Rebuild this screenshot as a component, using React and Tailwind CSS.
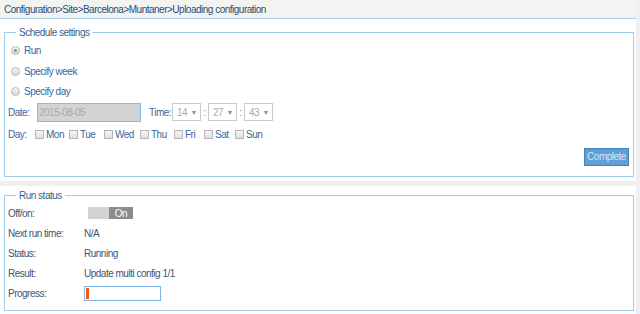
import React from 'react';

const DAYS = [
  { d: 'Mon', w: 'w-[34px]' },
  { d: 'Tue', w: 'w-[35px]' },
  { d: 'Wed', w: 'w-[36px]' },
  { d: 'Thu', w: 'w-[34px]' },
  { d: 'Fri', w: 'w-[30px]' },
  { d: 'Sat', w: 'w-[31px]' },
  { d: 'Sun', w: 'w-[30px]' },
];

const Radio = ({ checked, label }) => (
  <label className="flex items-center gap-[4px] pl-[3px]">
    <span className="w-[9px] h-[9px] rounded-full border border-[#b9b9b9] bg-gradient-to-b from-[#f4f4f4] to-[#d8d8d8] flex items-center justify-center">
      {checked && <span className="w-[3px] h-[3px] rounded-full bg-[#8a8a8a]" />}
    </span>
    <span>{label}</span>
  </label>
);

const TimeSelect = ({ value }) => (
  <div className="w-[29px] h-[18px] border border-[#c8c8c8] bg-white flex items-center justify-between pl-[4px] pr-[3px] text-[#a9a9a9]">
    <span>{value}</span>
    <span className="text-[7px] leading-none text-[#8f8f8f]">▼</span>
  </div>
);

const Row = ({ label, children }) => (
  <div className="h-[20px] flex items-center">
    <span className="w-[76px]">{label}</span>
    {children}
  </div>
);

export default function App() {
  return (
    <div className="w-[640px] h-[314px] bg-[#f0f0f0] overflow-hidden font-['Liberation_Sans',Arial,sans-serif] text-[10px] tracking-[-0.5px] leading-[13px]">
      <div className="w-[636px] h-[19px] bg-[#f3f3f1] border-b border-[#a8d1ee] pl-[4px] flex items-center text-[#2d4b72]">
        Configuration&gt;Site&gt;Barcelona&gt;Muntaner&gt;Uploading configuration
      </div>

      <div className="w-[636px] bg-white pt-[7px] pb-[4px] pl-[4px] pr-[2px]">
        <fieldset className="border border-[#9fcdec] pl-[3px] pr-[4px] pt-[1px] pb-[10px] text-[#3a669c]">
          <legend className="ml-[8px] px-[3px] text-[#3a5f8c]">Schedule settings</legend>
          <div className="h-[21px] flex items-center"><Radio checked label="Run" /></div>
          <div className="h-[20px] flex items-center"><Radio label="Specify week" /></div>
          <div className="h-[20px] flex items-center"><Radio label="Specify day" /></div>

          <div className="h-[20px] mt-[1px] flex items-center">
            <span className="w-[29px]">Date:</span>
            <div className="w-[104px] h-[19px] bg-[#d3d3d3] border border-[#86bbe4] flex items-center pl-[1px] text-[#aaaaaa]">
              2015-08-05
            </div>
            <span className="ml-[8px] w-[23px]">Time:</span>
            <TimeSelect value="14" />
            <span className="w-[7px] text-center text-[#8a8a8a]">:</span>
            <TimeSelect value="27" />
            <span className="w-[7px] text-center text-[#8a8a8a]">:</span>
            <TimeSelect value="43" />
          </div>

          <div className="h-[20px] mt-[2px] flex items-center">
            <span className="w-[27px]">Day:</span>
            {DAYS.map(({ d, w }) => (
              <label key={d} className={`flex items-center ${w}`}>
                <span className="w-[9px] h-[9px] border border-[#b5b5b5] bg-gradient-to-b from-[#f6f6f6] to-[#e0e0e0] mr-[2px]" />
                <span>{d}</span>
              </label>
            ))}
          </div>

          <div className="mt-[4px] flex justify-end">
            <button className="h-[18px] w-[45px] bg-[#5f9fd6] border border-[#3f82c0] text-[#d2e6f7] leading-none">
              Complete
            </button>
          </div>
        </fieldset>
      </div>

      <div className="w-[636px] bg-white mt-[5px] pt-[3px] pb-[3px] pl-[4px] pr-[2px]">
        <fieldset className="border border-[#9fcdec] pl-[3px] pr-[4px] pt-[1px] pb-[7px] text-[#3c5573]">
          <legend className="ml-[8px] px-[3px] text-[#3a5f8c]">Run status</legend>
          <Row label="Off/on:">
            <div className="ml-[4px] flex h-[12px]">
              <div className="w-[21px] bg-[#d2d2d2]" />
              <div className="w-[24px] bg-[#8c8c8c] text-white flex items-center justify-center">On</div>
            </div>
          </Row>
          <Row label="Next run time:"><span>N/A</span></Row>
          <Row label="Status:"><span>Running</span></Row>
          <Row label="Result:"><span>Update multi config 1/1</span></Row>
          <Row label="Progress:">
            <div className="w-[77px] h-[15px] border-[1.5px] border-[#7cb6e8] bg-white flex p-[1px]">
              <div className="w-[3px] bg-[#f05a1a]" />
            </div>
          </Row>
        </fieldset>
      </div>
    </div>
  );
}
